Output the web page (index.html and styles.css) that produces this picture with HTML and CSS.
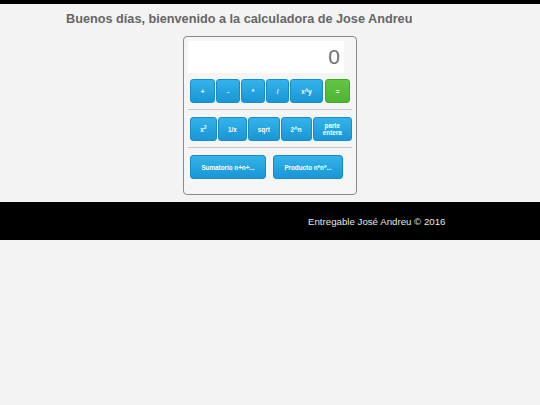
FILE: index.html
```html
<!DOCTYPE html>
<html lang="es">
<head>
    <meta charset="UTF-8">
    <title>Calculadora</title>
    <link rel="stylesheet" href="styles.css">
</head>
<body>
    <div class="top-bar"></div>

    <!-- saludo -->
    <h1 class="welcome">Buenos días, bienvenido a la calculadora de Jose Andreu</h1>

    <!-- calculadora -->
    <div class="calc">
        <div class="display">0</div>

        <div class="row row-ops">
            <button class="btn w25">+</button>
            <button class="btn w24">-</button>
            <button class="btn w24">*</button>
            <button class="btn w23">/</button>
            <button class="btn w33">x^y</button>
            <button class="btn btn-eq w25">=</button>
        </div>
        <hr class="sep">
        <div class="row row-fn">
            <button class="btn w28">x<sup>2</sup></button>
            <button class="btn w30">1/x</button>
            <button class="btn w33">sqrt</button>
            <button class="btn w32">2^n</button>
            <button class="btn w41">parte<br>entera</button>
        </div>
        <hr class="sep">
        <div class="row row-big">
            <button class="btn w76">Sumatorio n+n+...</button>
            <button class="btn w70">Producto n*n*...</button>
        </div>
    </div>

    <div class="footer">
        <span>Entregable José Andreu © 2016</span>
    </div>
</body>
</html>
```

FILE: styles.css
```css
/* base */
body {
    margin: 0;
    font-family: "Liberation Sans", Arial, sans-serif;
    background-color: #f3f3f3;
}

.top-bar {
    height: 4px;
    background-color: #000;
}

.welcome {
    margin: 7px 0 0 66px;
    font-size: 12.7px;
    line-height: 16px;
    color: #666;
    font-weight: bold;
}

/* calculadora */
.calc {
    width: 164px;
    height: 149px;
    margin: 9px 0 0 183px;
    padding: 4px;
    border: 1px solid #8a8a8a;
    border-radius: 4px;
    background-color: #f5f5f5;
}

.display {
    width: 152px;
    height: 32px;
    padding-right: 4px;
    background-color: #fff;
    text-align: right;
    font-size: 21px;
    line-height: 32px;
    color: #707070;
}

.row {
    display: flex;
    gap: 1px;
    margin-left: 2px;
}

.row-ops {
    margin-top: 6px;
}

.row-big {
    gap: 7px;
}

.btn {
    height: 24px;
    padding: 0;
    border: 1px solid #1b8ccb;
    border-radius: 3px;
    background: linear-gradient(#33b3ea, #1996d6);
    color: #fff;
    font-family: "Liberation Sans", Arial, sans-serif;
    font-size: 6.3px;
    font-weight: bold;
    line-height: 7px;
}

.btn sup {
    font-size: 5px;
    line-height: 0;
}

.btn-eq {
    margin-left: 1px;
    border-color: #46a530;
    background: linear-gradient(#63c544, #4db532);
}

.w23 { width: 23px; }
.w24 { width: 24px; }
.w25 { width: 25px; }
.w28 { width: 28px; }
.w30 { width: 30px; }
.w32 { width: 32px; }
.w33 { width: 33px; }
.w41 { width: 41px; }
.w70 { width: 70px; }
.w76 { width: 76px; }

.sep {
    width: 164px;
    margin: 6px 0 7px 0;
    border: none;
    border-top: 1px solid #c8c8c8;
}

/* pie */
.footer {
    height: 38px;
    margin-top: 7px;
    background-color: #000;
    display: flex;
    align-items: center;
    padding-left: 308px;
    color: #e6e6e6;
    font-size: 9.7px;
}
```
